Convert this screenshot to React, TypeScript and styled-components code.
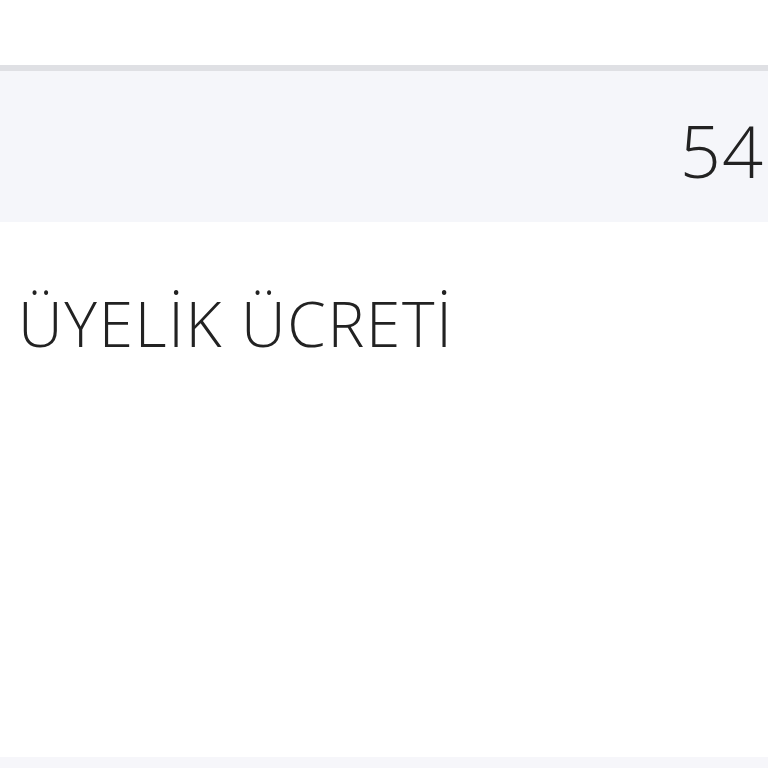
import React from 'react'
import styled, { createGlobalStyle } from 'styled-components'

const GlobalStyle = createGlobalStyle`
  html, body {
    margin: 0;
    padding: 0;
    background: #ffffff;
  }
  body {
    font-family: "Open Sans", "Liberation Sans", sans-serif;
    color: #222222;
    overflow: hidden;
  }
`

const Page = styled.div`
  display: flex;
  flex-direction: column;
  width: 768px;
  height: 768px;
`

const TopSpace = styled.div`
  height: 65px;
  border-bottom: 6px solid #dfe0e4;
`

const CountBand = styled.div`
  display: flex;
  align-items: center;
  justify-content: flex-end;
  height: 151px;
  padding-right: 4px;
  background: #f5f6fa;
`

const Count = styled.span`
  font-size: 72px;
  font-weight: 300;
  letter-spacing: 1px;
  line-height: 1;
  margin-top: 6px;
`

const Body = styled.div`
  flex: 1;
  padding: 70px 0 0 18px;
`

const Title = styled.h2`
  margin: 0;
  font-size: 62px;
  font-weight: 300;
  letter-spacing: 1.7px;
  line-height: 1;
  white-space: nowrap;
`

const Footer = styled.div`
  height: 11px;
  background: #f6f6fa;
`

const App = () => {
  return (
    <>
      <GlobalStyle />
      <Page>
        <TopSpace />
        <CountBand>
          <Count>54</Count>
        </CountBand>
        <Body>
          <Title>ÜYELİK ÜCRETİ</Title>
        </Body>
        <Footer />
      </Page>
    </>
  )
}

export default App
